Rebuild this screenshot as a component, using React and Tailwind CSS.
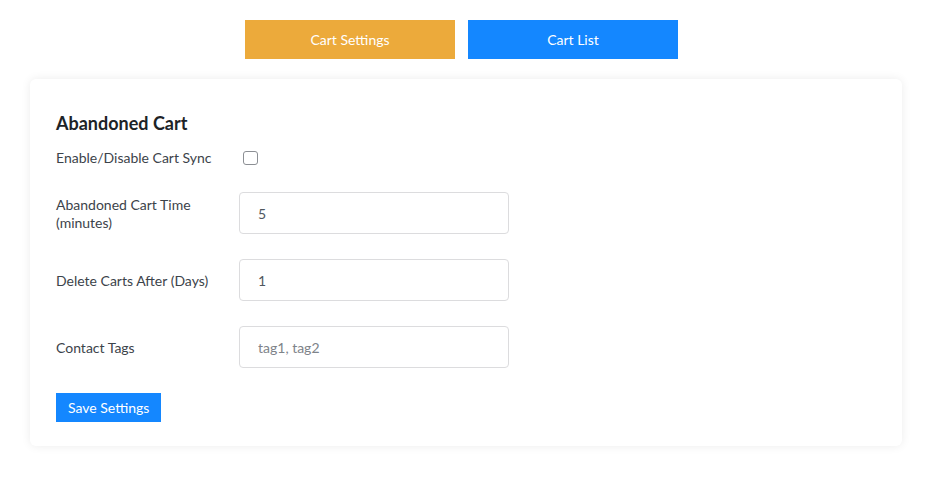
import { useState } from 'react';

const font = { fontFamily: 'Lato, "Open Sans", sans-serif' };

function Field({ label, value, placeholder }) {
  return (
    <div className="flex items-center">
      <label className="w-[183px] shrink-0 pt-[2px] text-[14px] leading-[18px] text-[#3c434a] pr-4">{label}</label>
      <input
        type="text"
        defaultValue={value}
        placeholder={placeholder}
        className="w-[270px] h-[42px] rounded-[4px] border border-[#dcdcde] bg-white px-[18px] text-[14px] text-[#50575e] placeholder:text-[#7e8389] outline-none"
      />
    </div>
  );
}

export default function App() {
  const [tab, setTab] = useState('settings');
  const [sync, setSync] = useState(false);

  return (
    <div className="min-h-screen bg-white" style={font}>
      {/* tabs */}
      <div className="flex justify-center gap-[13px] pt-5 pr-[9px]">
        <button
          onClick={() => setTab('settings')}
          className="w-[210px] h-[39px] bg-[#ecaa3b] text-white text-[14px]"
        >
          Cart Settings
        </button>
        <button
          onClick={() => setTab('list')}
          className="w-[210px] h-[39px] bg-[#1487ff] text-white text-[14px]"
        >
          Cart List
        </button>
      </div>

      {/* card */}
      <div className="mx-[30px] mt-5 rounded-[6px] bg-white px-[26px] pt-[33px] pb-[24px] shadow-[0_0_10px_rgba(0,0,0,0.08)]">
        <h2 className="text-[18px] leading-[22px] font-bold text-[#1d2327]">Abandoned Cart</h2>

        <div className="mt-[14px] flex items-center h-[20px]">
          <label className="w-[183px] shrink-0 text-[14px] leading-[18px] text-[#3c434a]">Enable/Disable Cart Sync</label>
          <input
            type="checkbox"
            checked={sync}
            onChange={(e) => setSync(e.target.checked)}
            className="ml-[4px] w-[15px] h-[14px] appearance-none rounded-[3px] border border-[#8c8f94] bg-white"
          />
        </div>

        <div className="mt-[24px] flex flex-col gap-[25px]">
          <Field label={<>Abandoned Cart Time<br />(minutes)</>} value="5" />
          <Field label="Delete Carts After (Days)" value="1" />
          <Field label="Contact Tags" placeholder="tag1, tag2" />
        </div>

        <button className="mt-[25px] h-[29px] px-3 bg-[#1487ff] text-white text-[14px]">Save Settings</button>
      </div>
    </div>
  );
}
